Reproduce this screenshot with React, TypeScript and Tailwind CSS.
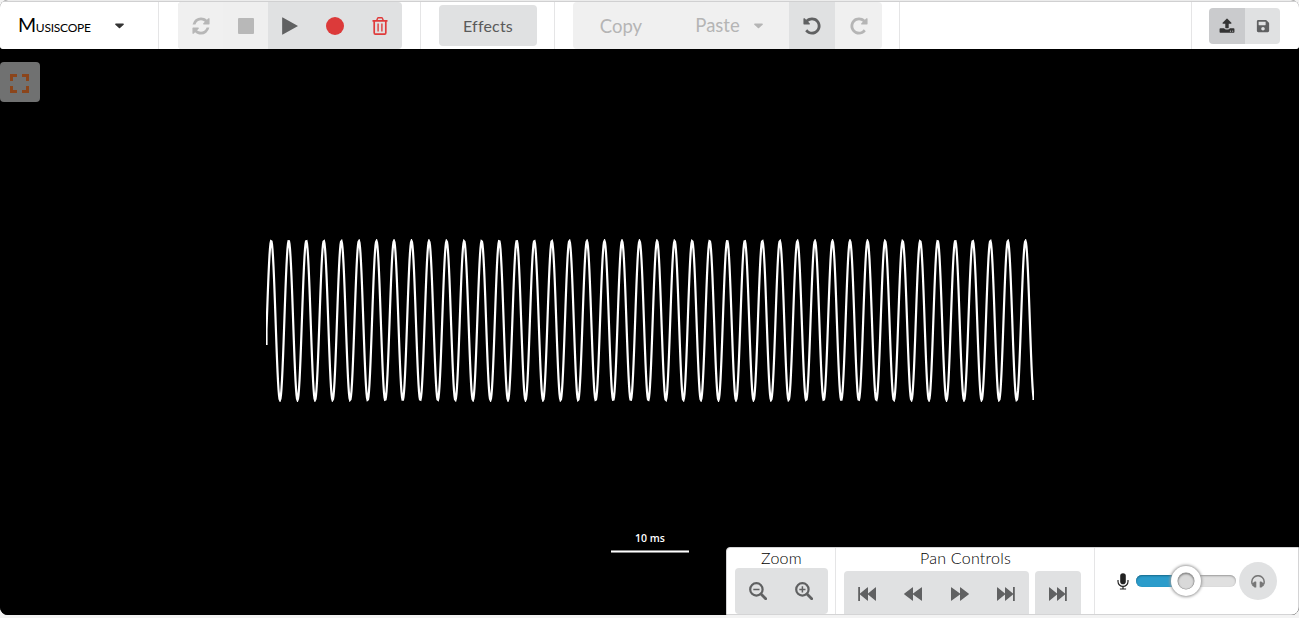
import React from "react";
import { FaSave } from "react-icons/fa";

const REFRESH =
  "M1639 1056q0 5-1 7-64 268-268 434.5t-478 166.5q-146 0-282.5-55t-243.5-157l-129 129q-19 19-45 19t-45-19-19-45v-448q0-26 19-45t45-19h448q26 0 45 19t19 45-19 45l-137 137q71 66 161 102t187 36q134 0 250-65t186-179q11-17 53-117 8-23 30-23h192q13 0 22.5 9.5t9.5 22.5zm25-800v448q0 26-19 45t-45 19h-448q-26 0-45-19t-19-45 19-45l138-138q-148-137-349-137-134 0-250 65t-186 179q-11 17-53 117-8 23-30 23h-199q-13 0-22.5-9.5t-9.5-22.5v-7q65-268 270-434.5t480-166.5q146 0 284 55.5t245 156.5l130-129q19-19 45-19t45 19 19 45z";
const UNDO =
  "M1664 896q0 156-61 298t-164 245-245 164-298 61q-172 0-327-72.5t-264-204.5q-7-10-6.5-22.5t8.5-20.5l137-138q10-9 25-9 16 2 23 12 73 95 179 147t225 52q104 0 198.500-40.500t163.500-109.500 109.500-163.500 40.500-198.500-40.500-198.500-109.500-163.500-163.500-109.500-198.500-40.500q-98 0-188 35.500t-160 101.500l137 138q31 30 14 69-17 40-59 40h-448q-26 0-45-19t-19-45v-448q0-42 40-59 39-17 69 14l130 129q107-101 244.500-156.500t284.500-55.500q156 0 298 61t245 164 164 245 61 298z";
const PLAY =
  "M1576 927l-1328 738q-23 13-39.500 3t-16.500-36v-1472q0-26 16.500-36t39.500 3l1328 738q23 13 23 31t-23 31z";
const UPLOAD =
  "M1344 1472q0-26-19-45t-45-19-45 19-19 45 19 45 45 19 45-19 19-45zm256 0q0-26-19-45t-45-19-45 19-19 45 19 45 45 19 45-19 19-45zm128-224v320q0 40-28 68t-68 28h-1472q-40 0-68-28t-28-68v-320q0-40 28-68t68-28h427q21 56 70.500 92t110.500 36h256q61 0 110.500-36t70.500-92h427q40 0 68 28t28 68zm-325-648q-17 40-59 40h-256v448q0 26-19 45t-45 19h-256q-26 0-45-19t-19-45v-448h-256q-42 0-59-40-17-39 14-69l448-448q18-19 45-19t45 19l448 448q31 30 14 69z";

function Glyph({ d, className }: { d: string; className: string }) {
  return (
    <svg viewBox="0 0 1792 1792" className={className} fill="currentColor">
      <path d={d} />
    </svg>
  );
}

function Caret({ className }: { className: string }) {
  return (
    <svg viewBox="0 0 10 6" className={className} fill="currentColor">
      <path d="M1 .3h8c.9 0 1.100.7.6 1.200L5.600 5.300c-.4.4-.8.4-1.200 0L.4 1.500C-.1 1 .1.3 1 .3z" />
    </svg>
  );
}

function Trash() {
  return (
    <svg viewBox="0 0 16 18" className="h-[18px] w-4" fill="none" stroke="currentColor">
      <path d="M.5 3.900h15" strokeWidth="1.700" />
      <path d="M4.700 3.500l.9-2.300q.2-.4.7-.4h3.400q.5 0 .7.400l.9 2.300" strokeWidth="1.400" />
      <path d="M2.200 4v11.700q0 1.400 1.200 1.400h9.200q1.200 0 1.200-1.400V4" strokeWidth="1.700" />
      <path d="M6.100 6.500v8M9.900 6.500v8" strokeWidth="1.400" />
    </svg>
  );
}

function Magnifier({ plus }: { plus?: boolean }) {
  return (
    <svg viewBox="0 0 18 18" className="size-[18px]" fill="none" stroke="currentColor">
      <circle cx="7.400" cy="7.400" r="6.200" strokeWidth="2.200" />
      <path d="M12 12l4.700 4.700" strokeWidth="2.800" strokeLinecap="round" />
      <path d="M4.300 7.400h6.200" strokeWidth="1.500" />
      {plus && <path d="M7.400 4.300v6.200" strokeWidth="1.500" />}
    </svg>
  );
}

function Seek({ back, bar }: { back?: boolean; bar?: boolean }) {
  return (
    <svg viewBox="0 0 18 14" className={back ? "h-3.5 w-[18px] -scale-x-100" : "h-3.5 w-[18px]"} fill="currentColor">
      {bar ? (
        <path d="M0 .6Q0-.2.7.4L8 6.600V.6q0-.8.7-.2L16 6.600V0h1.800v14H16V7.400l-7.300 6.200q-.7.600-.7-.2V7.400L.7 13.600Q0 14.200 0 13.400z" />
      ) : (
        <path d="M0 .6Q0-.2.7.4L9 6.600V.6q0-.8.7-.2l7.900 6q.6.600 0 1.200l-7.900 6q-.7.600-.7-.2V7.400L.7 13.600Q0 14.200 0 13.400z" />
      )}
    </svg>
  );
}

function Microphone() {
  return (
    <svg viewBox="0 0 12 17" className="h-[17px] w-3" fill="none" stroke="#222">
      <rect x="3.200" y=".2" width="5.600" height="11" rx="2.800" fill="#222" stroke="none" />
      <path d="M1 7v1.500a5 4.900 0 0 0 10 0V7M6 13.400v2.800M2.900 16h6.200" strokeWidth="1.200" />
    </svg>
  );
}

function Headphones() {
  return (
    <svg viewBox="0 0 14 13" className="h-[13px] w-3.5" fill="currentColor">
      <path d="M1.500 9.500Q.8 8.200.8 6.700a6.200 6 0 0 1 12.400 0q0 1.500-.7 2.800" fill="none" stroke="currentColor" strokeWidth="1.500" />
      <path d="M3.200 7q0-.6.6-.6h.9q.6 0 .6.600v4.900q0 .6-.6.600h-.9q-.6 0-.6-.6l-2-1.200V8.200zM10.800 7q0-.6-.6-.6h-.9q-.6 0-.6.600v4.900q0 .6.6.600h.9q.6 0 .6-.6l2-1.200V8.200z" />
    </svg>
  );
}

const LEFT = 266.5;
const RIGHT = 1033.5;
const PEAK = 271.2;
const PERIOD = 17.54;

function wavePath() {
  let d = "M0.500 106";
  for (let x = LEFT; x <= RIGHT; x += 0.5) {
    const y = 81.5 - 79.5 * Math.cos((2 * Math.PI * (x - PEAK)) / PERIOD);
    d += `L${(x - 266).toFixed(1)} ${y.toFixed(2)}`;
  }
  return d + "L767.500 161";
}

const cell = "flex items-center justify-center";

export default function App() {
  return (
    <div className="flex h-[618px] w-[1299px] flex-col overflow-hidden bg-[#f3f3f3] font-['Lato',sans-serif] text-[#606162]">
      <div className="flex h-[615px] flex-col overflow-hidden rounded-lg bg-black">
        <header className="flex h-[49px] shrink-0 flex-col rounded-b-[3px] bg-[#ececec] pt-px">
          <div className="flex h-12 rounded-[4px] border-t border-[#d0d0d1] bg-white">
            <div className="flex w-[159px] items-center border-r border-[#e5e5e6] pl-[18px] text-black">
              <span className="w-[96px] text-[17.500px] leading-6 tracking-[-0.25px] [font-variant:small-caps] first-letter:text-[19.500px]">Musiscope</span>
              <Caret className="ml-px h-[6px] w-[9px] text-[#333]" />
            </div>
            <div className="flex w-[262px] border-r border-[#e5e5e6] pl-[19px]">
              <div className="flex w-[224px] overflow-hidden rounded-[4px] bg-[#e0e1e2]">
                <div className={`${cell} w-[45px] bg-[#f0f0f0] pt-px text-[#b7b7b7]`}>
                  <Glyph d={REFRESH} className="size-5" />
                </div>
                <div className={`${cell} w-[45px] bg-[#efefef] pt-px`}>
                  <span className="size-4 rounded-[1px] bg-[#b8b8b8]" />
                </div>
                <div className={`${cell} w-[45px] pt-px pr-[2px] text-[#606162]`}>
                  <Glyph d={PLAY} className="size-5" />
                </div>
                <div className={`${cell} w-[45px] pt-px pr-[2px]`}>
                  <span className="size-[18px] rounded-full bg-[#dc3a3a]" />
                </div>
                <div className={`${cell} w-[44px] pt-px text-[#e03b3b]`}>
                  <Trash />
                </div>
              </div>
            </div>
            <div className="flex w-[134px] border-r border-[#e5e5e6] pt-[3px] pl-[18px]">
              <button className="h-[41px] w-[98px] rounded-[4px] bg-[#e0e1e2] text-base tracking-[0.2px] text-[#5a5a5a]">Effects</button>
            </div>
            <div className="flex w-[345px] border-r border-[#e5e5e6] pl-[18px]">
              <div className="flex w-[309px] overflow-hidden rounded-[4px] bg-[#f0f0f0] text-[#b5b5b5]">
                <div className={`${cell} w-24 pt-[2px] text-[18.500px]`}>Copy</div>
                <div className={`${cell} w-[120px] gap-[14px] pt-px text-[18.500px]`}>
                  <span>Paste</span>
                  <Caret className="h-[6px] w-[9px]" />
                </div>
                <div className={`${cell} w-[46px] bg-[#e0e1e2] pt-px text-[#606162]`}>
                  <Glyph d={UNDO} className="size-5" />
                </div>
                <div className={`${cell} w-[47px] pt-px`}>
                  <Glyph d={UNDO} className="size-5 -scale-x-100" />
                </div>
              </div>
            </div>
            <div className="w-[292px] border-r border-[#e5e5e6]" />
            <div className="flex pt-[6px] pl-[17px]">
              <div className="flex h-9 w-[71px] overflow-hidden rounded-[4px]">
                <div className={`${cell} w-9 bg-[#cacbcd] text-[#333]`}>
                  <Glyph d={UPLOAD} className="size-4" />
                </div>
                <div className={`${cell} w-[35px] bg-[#e0e1e2] text-[#606162]`}>
                  <FaSave className="size-3.5" />
                </div>
              </div>
            </div>
          </div>
        </header>
        <main className="relative h-[566px] shrink-0 bg-black">
          <button className={`${cell} absolute top-[13px] left-0 size-10 rounded-[4px] bg-[#707171] pt-[2px]`}>
            <svg viewBox="0 0 19 19" className="mr-px size-[19px]" fill="none" stroke="#8b451b" strokeWidth="3">
              <path d="M1.500 7v-5.500h5.500M12 1.500h5.500v5.500M17.500 12v5.500h-5.500M7 17.500h-5.500v-5.500" />
            </svg>
          </button>
          <svg viewBox="0 0 768 163" className="absolute top-[190px] left-[266px] h-[163px] w-[768px]">
            <path d={wavePath()} fill="none" stroke="white" strokeWidth="2.200" />
          </svg>
          <div className="absolute top-[482px] left-[611px] flex w-[78px] flex-col items-center font-['Open_Sans',sans-serif] text-[10.500px] leading-[15px] font-semibold text-white">
            <span>10 ms</span>
            <span className="mt-1 h-[3px] w-full border-y border-[#888] bg-white" />
          </div>
          <div className="absolute right-0 bottom-0 flex h-[68px] w-[573px] overflow-hidden rounded-tl-[4px] rounded-br-[5px] border border-[#d4d4d5] bg-white">
            <section className="flex w-[109px] flex-col items-center border-r border-[#e5e5e6] *:shrink-0">
              <h2 className="h-5 pl-px text-base leading-5 font-light tracking-[0.25px] text-black">Zoom</h2>
              <div className="flex h-[46px] w-[93px] rounded-[4px] bg-[#e0e1e2]">
                <div className={`${cell} w-[46px]`}><Magnifier /></div>
                <div className={`${cell} w-[47px]`}><Magnifier plus /></div>
              </div>
            </section>
            <section className="flex w-[259px] flex-col items-center border-r border-[#e5e5e6] *:shrink-0">
              <h2 className="h-[23px] pl-px text-base leading-5 font-light tracking-[0.25px] text-black">Pan Controls</h2>
              <div className="flex gap-[6px] self-start pl-2">
                <div className="flex h-[46px] w-[185px] rounded-t-[4px] bg-[#e0e1e2]">
                  <div className={`${cell} w-[46px]`}><Seek back bar /></div>
                  <div className={`${cell} w-[46px]`}><Seek back /></div>
                  <div className={`${cell} w-[47px]`}><Seek /></div>
                  <div className={`${cell} w-[46px]`}><Seek bar /></div>
                </div>
                <div className={`${cell} h-[46px] w-[46px] rounded-t-[4px] bg-[#e0e1e2]`}><Seek bar /></div>
              </div>
            </section>
            <section className="flex items-center pl-[22px]">
              <Microphone />
              <div className="relative ml-[7px] flex h-3 w-[100px] rounded-full bg-[#e0e0e0] shadow-[inset_0_1px_2px_#999]">
                <span className="h-3 w-[50px] rounded-l-full bg-[#2b9ccb] shadow-[inset_0_1px_2px_#17698b]" />
                <span className={`${cell} absolute -top-[9px] left-[35px] size-[30px] rounded-full bg-white shadow-[0_0_3px_1px_#999]`}>
                  <span className="size-4 rounded-full bg-[#d9d9d9] shadow-[inset_0_1px_2px_#777,0_0_0_0.500px_#888]" />
                </span>
              </div>
              <div className={`${cell} ml-[3px] size-[38px] rounded-full bg-[#e0e1e2] text-[#777]`}>
                <Headphones />
              </div>
            </section>
          </div>
        </main>
      </div>
    </div>
  );
}
